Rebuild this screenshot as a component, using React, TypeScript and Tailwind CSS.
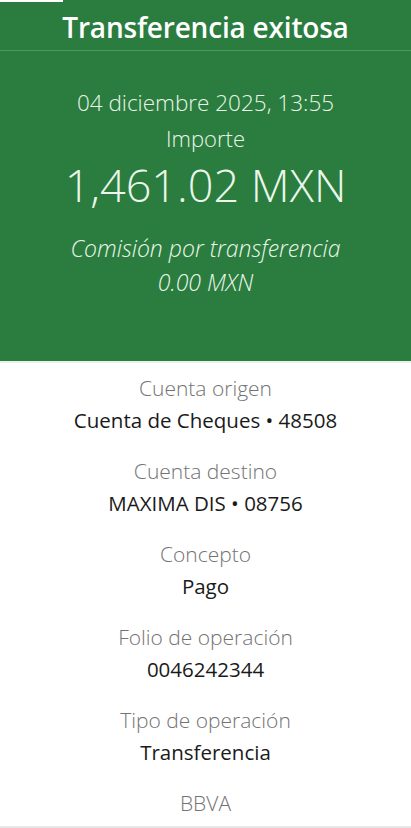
const details = [
  { label: "Cuenta origen", value: "Cuenta de Cheques • 48508" },
  { label: "Cuenta destino", value: "MAXIMA DIS • 08756" },
  { label: "Concepto", value: "Pago" },
  { label: "Folio de operación", value: "0046242344" },
  { label: "Tipo de operación", value: "Transferencia" },
];

const App = () => {
  return (
    <div className="w-[411px] h-[828px] flex flex-col bg-white overflow-hidden font-['Open_Sans',sans-serif]">
      {/* Green summary */}
      <div className="bg-[#2a7d3f] h-[361px] flex flex-col text-[#eaf7ea]">
        <div className="h-[2px] w-[63px] bg-white" />
        <div className="h-[49px] flex items-center justify-center border-b border-[#4d9a5f]">
          <h1 className="text-[28px] font-semibold text-white tracking-[-0.2px] mt-[2px]">Transferencia exitosa</h1>
        </div>
        <div className="flex flex-col items-center pt-[37px]">
          <p className="text-[22.5px] leading-[30px] font-light">04 diciembre 2025, 13:55</p>
          <p className="text-[22px] leading-[30px] font-light mt-[5px]">Importe</p>
          <p className="text-[45px] leading-[50px] font-light mt-[7px]">1,461.02 MXN</p>
          <p className="text-[23px] leading-[30px] italic font-light mt-[23px]">Comisión por transferencia</p>
          <p className="text-[23px] leading-[30px] italic font-light mt-[4px]">0.00 MXN</p>
        </div>
      </div>
      <div className="h-[2px] bg-[#e6f3e6]" />

      {/* Details */}
      <div className="flex flex-col items-center pt-[10px]">
        {details.map((d) => (
          <div key={d.label} className="flex flex-col items-center h-[83px]">
            <p className="text-[21px] leading-[30px] text-[#737373] font-light">{d.label}</p>
            <p className="text-[20.5px] leading-[30px] text-[#1a1a1a] mt-[2px]">{d.value}</p>
          </div>
        ))}
        <p className="text-[21px] leading-[30px] text-[#737373] font-light">BBVA</p>
      </div>
      <div className="flex-1" />
      <div className="h-[2px] bg-[#e8e8e8]" />
    </div>
  );
};

export default App;
